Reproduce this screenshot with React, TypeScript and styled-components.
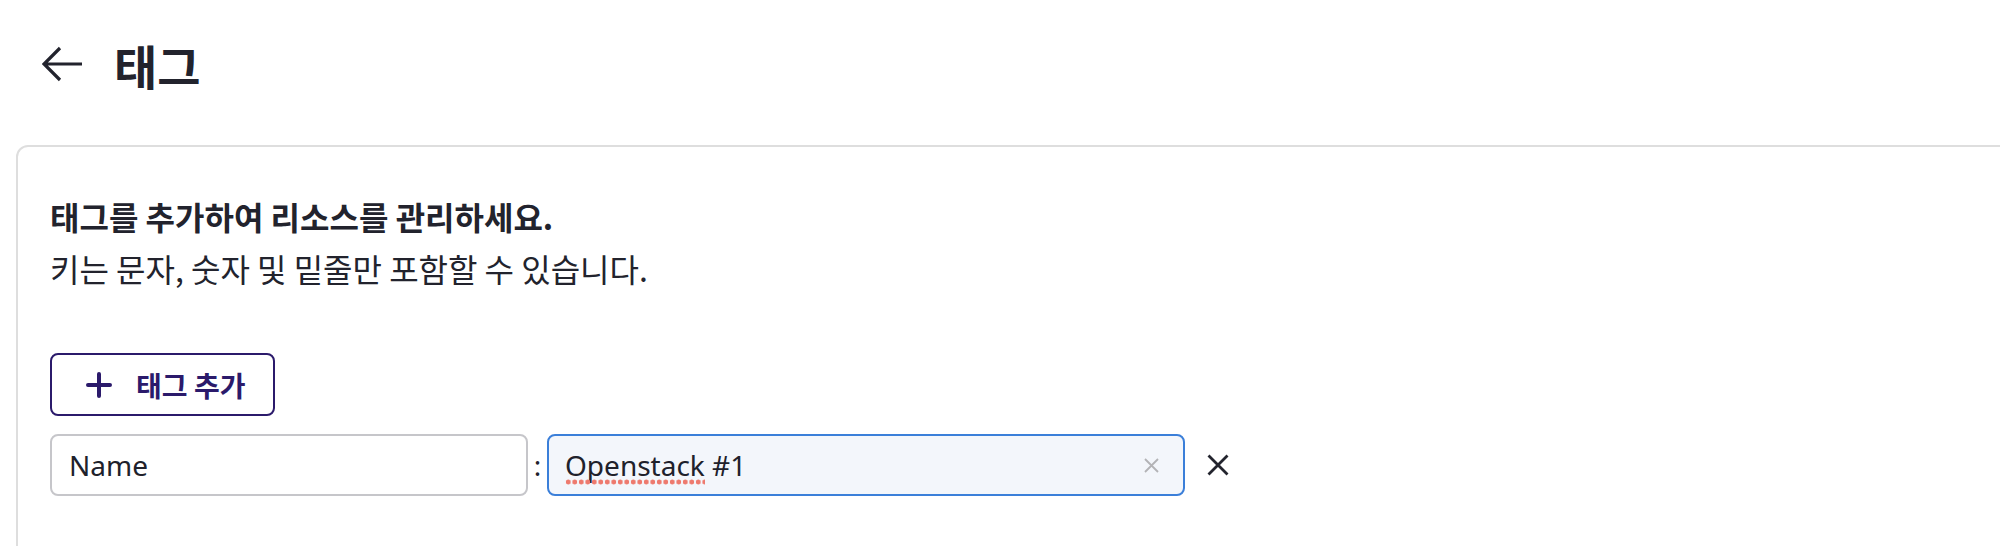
import React from 'react'
import styled, { createGlobalStyle } from 'styled-components'

const GlobalStyle = createGlobalStyle`
    html, body {
        margin : 0;
        padding : 0;
        background : #ffffff;
        overflow : hidden;
    }
    body {
        font-family : "Noto Sans", "Noto Sans CJK KR", sans-serif;
        color : #22232d;
    }
`

const App: React.FC = () => {
    return (
        <>
            <GlobalStyle />
            <Page>
                <Header>
                    <BackButton aria-label="back">
                        <svg width="42" height="36" viewBox="0 0 42 36" fill="none">
                            <path d="M40 18H3M18 2L2 18l16 16" stroke="#22232d" strokeWidth="3.2" strokeLinecap="butt" strokeLinejoin="miter" />
                        </svg>
                    </BackButton>
                    <Title>태그</Title>
                </Header>
                <Card>
                    <Heading>태그를 추가하여 리소스를 관리하세요.</Heading>
                    <Description>키는 문자, 숫자 및 밑줄만 포함할 수 있습니다.</Description>
                    <AddButton>
                        <svg width="26" height="26" viewBox="0 0 26 26" fill="none">
                            <path d="M13 2v22M2 13h22" stroke="#2b1a6b" strokeWidth="4" strokeLinecap="round" />
                        </svg>
                        <span>태그 추가</span>
                    </AddButton>
                    <TagRow>
                        <KeyField>Name</KeyField>
                        <Colon>:</Colon>
                        <ValueField>
                            <ValueText>
                                <Misspelled>Openstack</Misspelled> #1
                            </ValueText>
                            <ClearButton aria-label="clear">
                                <svg width="15" height="15" viewBox="0 0 15 15" fill="none">
                                    <path d="M1 1l13 13M14 1L1 14" stroke="#b3b3b6" strokeWidth="1.8" />
                                </svg>
                            </ClearButton>
                        </ValueField>
                        <RemoveButton aria-label="remove">
                            <svg width="22" height="22" viewBox="0 0 22 22" fill="none">
                                <path d="M1.5 1.5l19 19M20.5 1.5l-19 19" stroke="#23242e" strokeWidth="2.8" />
                            </svg>
                        </RemoveButton>
                    </TagRow>
                </Card>
            </Page>
        </>
    )
}

const Page = styled.div`
    width : 100%;
    min-height : 546px;
`

const Header = styled.div`
    height : 128px;
    display : flex;
    align-items : center;
    padding-left : 42px;
    gap : 30px;
`

const BackButton = styled.div`
    display : flex;
    align-items : center;
    cursor : pointer;
`

const Title = styled.h1`
    margin : 0;
    font-size : 47px;
    font-weight : 700;
    line-height : 1;
    color : #22232d;
    font-family : "Noto Sans CJK KR", sans-serif;
`

const Card = styled.div`
    margin : 17px -40px 0 16px;
    min-height : 500px;
    border : 2px solid #dedede;
    border-radius : 12px;
    padding : 48px 32px 0 32px;
`

const Heading = styled.div`
    font-size : 32px;
    font-weight : 700;
    line-height : 42px;
    font-family : "Noto Sans CJK KR", sans-serif;
`

const Description = styled.div`
    font-size : 32px;
    font-weight : 400;
    line-height : 42px;
    margin-top : 10px;
    font-family : "Noto Sans CJK KR", sans-serif;
`

const AddButton = styled.button`
    margin-top : 64px;
    height : 63px;
    width : 225px;
    box-sizing : border-box;
    display : flex;
    align-items : center;
    gap : 24px;
    padding : 0 0 0 34px;
    background : #ffffff;
    border : 2px solid #2b1a6b;
    border-radius : 8px;
    color : #2b1a6b;
    font-size : 28px;
    font-weight : 700;
    font-family : "Noto Sans CJK KR", sans-serif;
    cursor : pointer;
`

const TagRow = styled.div`
    margin-top : 18px;
    display : flex;
    align-items : center;
`

const Field = styled.div`
    height : 62px;
    box-sizing : border-box;
    border-radius : 8px;
    display : flex;
    align-items : center;
    font-size : 28px;
    color : #20212b;
`

const KeyField = styled(Field)`
    width : 478px;
    border : 2px solid #c6c6ca;
    padding-left : 17px;
    background : #ffffff;
`

const Colon = styled.span`
    width : 19px;
    text-align : center;
    font-size : 28px;
    color : #20212b;
`

const ValueField = styled(Field)`
    width : 638px;
    border : 2px solid #3b7fd9;
    background : #f3f6fb;
    padding : 0 24px 0 16px;
    justify-content : space-between;
`

const ValueText = styled.span`
    white-space : pre;
`

const Misspelled = styled.span`
    position : relative;
    &::after {
        content : '';
        position : absolute;
        left : 0;
        right : 0;
        bottom : -1px;
        height : 6px;
        background-image : radial-gradient(circle, #ee7a6e 2.2px, transparent 2.8px);
        background-repeat : repeat-x;
        background-size : 6.5px 6px;
    }
`

const ClearButton = styled.span`
    display : flex;
    align-items : center;
`

const RemoveButton = styled.span`
    display : flex;
    align-items : center;
    margin-left : 22px;
    cursor : pointer;
`

export default App
